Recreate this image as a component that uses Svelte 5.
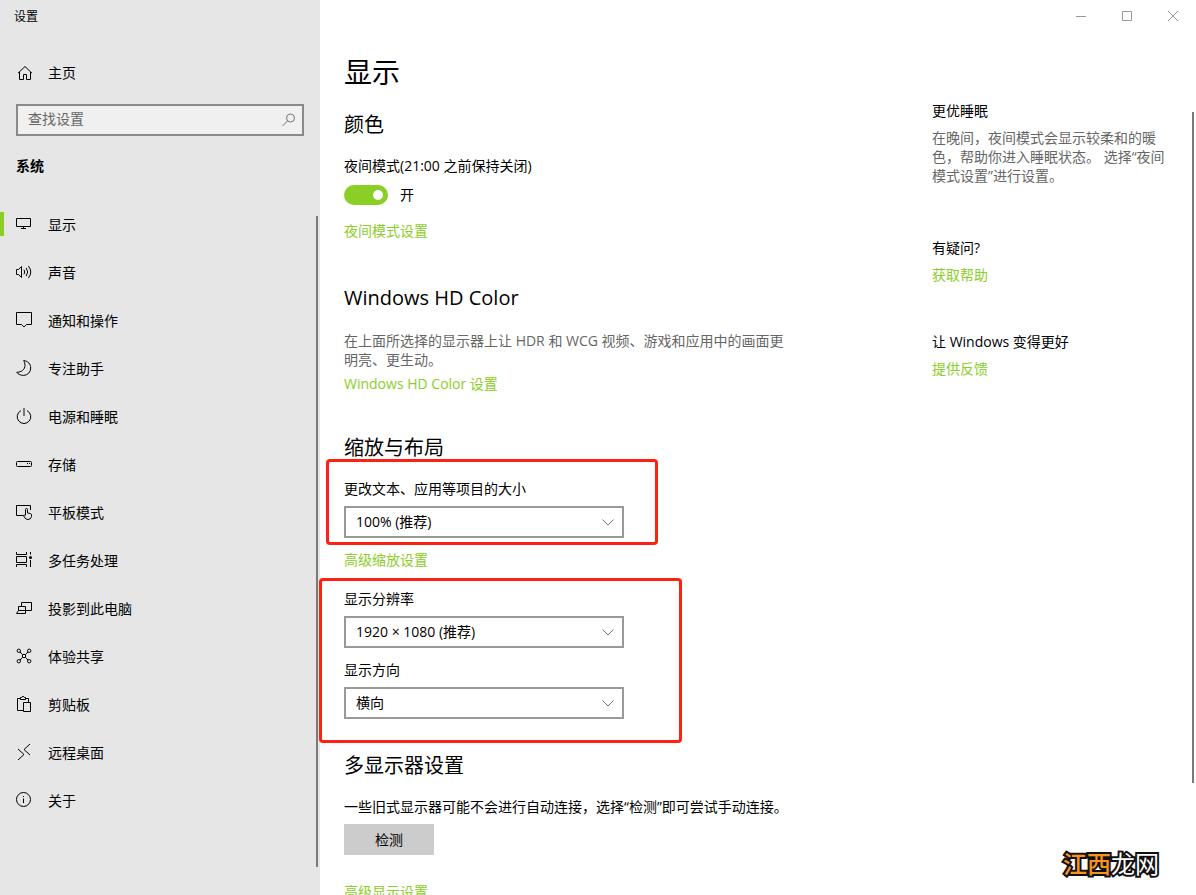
<script>
  const navItems = [
    { id: 'display', label: '显示' },
    { id: 'sound', label: '声音' },
    { id: 'notifications', label: '通知和操作' },
    { id: 'focus', label: '专注助手' },
    { id: 'power', label: '电源和睡眠' },
    { id: 'storage', label: '存储' },
    { id: 'tablet', label: '平板模式' },
    { id: 'multitask', label: '多任务处理' },
    { id: 'project', label: '投影到此电脑' },
    { id: 'shared', label: '体验共享' },
    { id: 'clipboard', label: '剪贴板' },
    { id: 'remote', label: '远程桌面' },
    { id: 'about', label: '关于' }
  ];

  let current = $state('display');
  let nightMode = $state(true);
  let query = $state('');
  let scale = $state('100% (推荐)');
  let resolution = $state('1920 × 1080 (推荐)');
  let orientation = $state('横向');

  const scales = ['100% (推荐)', '125%', '150%', '175%'];
  const resolutions = ['1920 × 1080 (推荐)', '1680 × 1050', '1600 × 900', '1280 × 720'];
  const orientations = ['横向', '纵向', '横向(翻转)', '纵向(翻转)'];

  function select(e, id) {
    e.preventDefault();
    current = id;
  }
</script>

{#snippet icon(id)}
  <svg class="icon" width="16" height="16" viewBox="0 0 16 16" aria-hidden="true">
    {#if id === 'home'}
      <path d="M2 9.200 9 2.500l7 6.700M3.500 8v7.500h4v-5h3v5h4V8" />
    {:else if id === 'display'}
      <path d="M.5 2.500h14v8H.5zM7.500 10.500v2M5 12.500h5" />
    {:else if id === 'sound'}
      <path d="M.5 5.500h2l3-3v11l-3-3h-2zM8 5.700q1.600 2.300 0 4.600M10.200 3.900q3 4.100 0 8.200M12.400 2q4.800 6 0 12" />
    {:else if id === 'notifications'}
      <path d="M.5.500h15v12h-5L8 15l-2.500-2.500H.5z" />
    {:else if id === 'focus'}
      <path d="M7.700.6C12 1 14.700 4 14.700 8a7.200 7.200 0 0 1-7.200 7.400C4.500 15.400 2 14.200.7 12.300 5.500 12.300 9 9.500 9 5.200 9 3.200 8.500 1.700 7.700.6z" />
    {:else if id === 'power'}
      <path d="M5 2.600a6.800 6.800 0 1 0 6 0" />
      <path class="soft" d="M8 0v8" />
    {:else if id === 'storage'}
      <rect x=".5" y="5.500" width="15" height="5" rx="1" />
      <path d="M11 7.500h1M13 7.500h1" />
    {:else if id === 'tablet'}
      <path d="M7 11.500H.5v-10h14V6" />
      <path d="M9.500 11V5.500q0-1 1-1t1 1V9l3 .6q1 .4 1 1.400v1.500q-.5 3-3.500 3-2 0-3-1.500L7.300 11.500q.5-1.300 2.200.3" />
    {:else if id === 'multitask'}
      <path d="M.5 0v2.500h10V0M.5 4.500h10v6H.5zM.5 15v-2.500h10V15M14.500 0v2.500M14.500 8v7" />
      <circle class="fill" cx="14.500" cy="5.500" r="1.500" />
    {:else if id === 'project'}
      <path d="M5.500 6V2.500h10v8H10M2.500 10.500v-4h7v4M.5 13.500h9M.5 13.500l2-3h7v3" />
    {:else if id === 'shared'}
      <circle cx="2.800" cy="2.800" r="1.700" />
      <circle cx="13.200" cy="2.800" r="1.700" />
      <circle cx="2.800" cy="13.200" r="1.700" />
      <circle cx="13.200" cy="13.200" r="1.700" />
      <circle cx="8" cy="8" r="1.700" />
      <path d="m4 4 2.800 2.800M12 4 9.200 6.800M4 12l2.800-2.800M12 12 9.200 9.200" />
    {:else if id === 'clipboard'}
      <path d="M7 14.500H1.500v-12h3M9.500 2.500h3V6M4.500 1.500v2h5v-2h-1Q8.300.5 7 .5t-1.500 1zM7.500 6.500h7v9h-7z" />
    {:else if id === 'remote'}
      <path d="m2 5 6 5.500L2 16M14 0 8 5.500 14 11" />
    {:else if id === 'about'}
      <circle cx="7.500" cy="7.500" r="7" />
      <path d="M7.500 6.500V11M7.500 4v1" />
    {/if}
  </svg>
{/snippet}

{#snippet dropdown(id, label, value, options, onchange)}
  <div class="field">
    <label for={id}>{label}</label>
    <div class="select-box">
      <select {id} {value} onchange={(e) => onchange(e.target.value)}>
        {#each options as option}
          <option value={option}>{option}</option>
        {/each}
      </select>
      <svg class="chevron" width="12" height="7" viewBox="0 0 12 7" aria-hidden="true">
        <path d="m.5.500 5.500 5.500L11.500.5" />
      </svg>
    </div>
  </div>
{/snippet}

<div class="window">
  <aside class="sidebar">
    <div class="app-title">设置</div>
    <a class="nav-item home" href="#home">{@render icon('home')}<span>主页</span></a>

    <div class="search">
      <input type="text" placeholder="查找设置" aria-label="查找设置" bind:value={query} />
      <svg width="14" height="14" viewBox="0 0 14 14" aria-hidden="true">
        <circle cx="8.500" cy="5" r="4" />
        <path d="M5.700 7.800.5 13" />
      </svg>
    </div>

    <div class="group-title">系统</div>

    <div class="nav-area">
      <nav>
        {#each navItems as item (item.id)}
          <a
            class="nav-item"
            class:active={current === item.id}
            href="#{item.id}"
            onclick={(e) => select(e, item.id)}
          >
            {@render icon(item.id)}<span>{item.label}</span>
          </a>
        {/each}
      </nav>
      <div class="thumb"></div>
    </div>
  </aside>

  <div class="main">
    <div class="titlebar">
      <button aria-label="最小化">
        <svg width="10" height="10" viewBox="0 0 10 10"><path d="M0 5.500h10" /></svg>
      </button>
      <button aria-label="最大化">
        <svg width="10" height="10" viewBox="0 0 10 10"><path d="M.5.500h9v9h-9z" /></svg>
      </button>
      <button aria-label="关闭">
        <svg width="10" height="10" viewBox="0 0 10 10"><path d="m0 0 10 10M10 0 0 10" /></svg>
      </button>
    </div>

    <div class="body">
      <main class="content">
        <h1>显示</h1>

        <section class="color">
          <h2>颜色</h2>
          <label for="night">夜间模式(21:00 之前保持关闭)</label>
          <div class="toggle-row">
            <input id="night" class="toggle" type="checkbox" role="switch" bind:checked={nightMode} />
            <span>{nightMode ? '开' : '关'}</span>
          </div>
          <a class="link" href="#night-settings">夜间模式设置</a>
        </section>

        <section class="hd-color">
          <h2>Windows HD Color</h2>
          <p class="muted">在上面所选择的显示器上让 HDR 和 WCG 视频、游戏和应用中的画面更明亮、更生动。</p>
          <a class="link" href="#hd-color">Windows HD Color 设置</a>
        </section>

        <section class="layout">
          <h2>缩放与布局</h2>
          <div class="marked small">
            {@render dropdown('scale', '更改文本、应用等项目的大小', scale, scales, (v) => (scale = v))}
          </div>
          <a class="link" href="#scaling">高级缩放设置</a>
          <div class="marked large">
            {@render dropdown('resolution', '显示分辨率', resolution, resolutions, (v) => (resolution = v))}
            {@render dropdown('orientation', '显示方向', orientation, orientations, (v) => (orientation = v))}
          </div>
        </section>

        <section class="multi">
          <h2>多显示器设置</h2>
          <p>一些旧式显示器可能不会进行自动连接，选择“检测”即可尝试手动连接。</p>
          <button class="detect">检测</button>
          <a class="link" href="#advanced">高级显示设置</a>
        </section>
      </main>

      <aside class="help">
        <section>
          <h3>更优睡眠</h3>
          <p class="muted">在晚间，夜间模式会显示较柔和的暖色，帮助你进入睡眠状态。 选择“夜间模式设置”进行设置。</p>
        </section>
        <section>
          <h3>有疑问?</h3>
          <a class="link" href="#help">获取帮助</a>
        </section>
        <section>
          <h3>让 Windows 变得更好</h3>
          <a class="link" href="#feedback">提供反馈</a>
        </section>
      </aside>
      <div class="thumb"></div>
    </div>
  </div>

  <div class="watermark"><span>江西</span>龙网</div>
</div>

<style>
  :global(body) {
    margin: 0;
  }

  .window {
    --accent: #8bce26;
    --mark: #ff2014;
    position: relative;
    display: grid;
    grid-template-columns: 320px minmax(0, 1fr);
    height: 100vh;
    overflow: hidden;
    background: #fff;
    color: #000;
    font: 14px/20px 'Open Sans', 'Noto Sans CJK SC', sans-serif;
  }

  h1, h2, h3, p {
    margin: 0;
    font-weight: 400;
  }

  input, select, button {
    box-sizing: border-box;
    margin: 0;
    color: inherit;
    font: inherit;
  }

  svg {
    flex: none;
    fill: none;
    stroke: currentColor;
  }

  /* Sidebar */
  .sidebar {
    display: flex;
    flex-direction: column;
    min-height: 0;
    background: #e6e6e6;
  }

  .app-title {
    padding-left: 14px;
    font-size: 12px;
    line-height: 34px;
  }

  .nav-item {
    position: relative;
    display: flex;
    align-items: center;
    gap: 16px;
    height: 48px;
    padding-left: 16px;
    color: inherit;
    text-decoration: none;
  }

  .nav-item.home {
    height: 40px;
    margin: 19px 0 11px;
  }

  .nav-item.active::before {
    content: '';
    position: absolute;
    left: 0;
    top: 11px;
    width: 4px;
    height: 24px;
    background: var(--accent);
  }

  .icon {
    margin-bottom: 2px;
    overflow: visible;
  }

  .soft {
    stroke: #777;
    stroke-width: 2;
  }

  .fill {
    fill: currentColor;
    stroke: none;
  }

  .search {
    display: flex;
    align-items: center;
    box-sizing: border-box;
    height: 32px;
    margin: 0 16px;
    padding-right: 6px;
    border: 2px solid #8a8a8a;
    background: #f0f0f0;
  }

  .search input {
    flex: 1;
    min-width: 0;
    height: 28px;
    padding: 0 10px 3px;
    border: 0;
    outline: 0;
    background: none;
  }

  .search input::placeholder {
    color: #666;
    opacity: 1;
  }

  .search svg {
    color: #777;
  }

  .group-title {
    margin: 20px 16px 25px;
    font-weight: 700;
  }

  .nav-area {
    display: flex;
    flex: 1;
    min-height: 0;
  }

  nav {
    flex: 1;
  }

  .thumb {
    flex: none;
    width: 2px;
    background: #7a7a7a;
  }

  .nav-area .thumb {
    margin: 15px 2px 28px 0;
  }

  /* Main pane */
  .main {
    display: flex;
    flex-direction: column;
    min-height: 0;
  }

  .titlebar {
    display: flex;
    flex: none;
    justify-content: flex-end;
    height: 32px;
  }

  .titlebar button {
    display: flex;
    align-items: center;
    justify-content: center;
    width: 46px;
    padding: 0;
    border: 0;
    background: none;
    color: #999;
  }

  .body {
    display: flex;
    flex: 1;
    min-height: 0;
    padding-left: 24px;
  }

  .content {
    flex: 1;
    min-width: 0;
    padding-top: 22px;
  }

  h1 {
    font-size: 28px;
    line-height: 36px;
  }

  h2 {
    margin-bottom: 17px;
    font-size: 20px;
    line-height: 28px;
  }

  label, .link {
    display: block;
    width: fit-content;
  }

  .link {
    color: var(--accent);
    text-decoration: none;
  }

  .muted {
    max-width: 444px;
    color: #666;
    line-height: 19px;
  }

  .color {
    margin-top: 21px;
  }

  .toggle-row {
    display: flex;
    align-items: center;
    gap: 12px;
    margin: 9px 0 16px;
  }

  .toggle {
    display: flex;
    align-items: center;
    justify-content: flex-start;
    appearance: none;
    width: 44px;
    height: 20px;
    padding: 0 5px;
    border-radius: 10px;
    background: #999;
  }

  .toggle:checked {
    justify-content: flex-end;
    background: var(--accent);
  }

  .toggle::before {
    content: '';
    width: 10px;
    height: 10px;
    border-radius: 50%;
    background: #fff;
  }

  .hd-color {
    margin-top: 43px;
  }

  .hd-color h2 {
    margin-bottom: 19px;
  }

  .hd-color .link {
    margin-top: 5px;
  }

  .layout {
    margin-top: 40px;
  }

  .marked {
    position: relative;
    display: grid;
    gap: 12px;
    width: 280px;
  }

  .marked::after {
    content: '';
    position: absolute;
    border: 3px solid var(--mark);
    border-radius: 4px;
    pointer-events: none;
  }

  .marked.small::after {
    inset: -20px -34px -7px -18px;
  }

  .marked.large::after {
    inset: -11px -58px -24px -25px;
  }

  .layout .link {
    margin: 12px 0 19px;
  }

  .field label {
    margin-bottom: 7px;
  }

  .select-box {
    display: grid;
    align-items: center;
  }

  .select-box > * {
    grid-area: 1 / 1;
  }

  select {
    appearance: none;
    width: 100%;
    height: 32px;
    padding: 0 32px 0 10px;
    border: 2px solid #999;
    border-radius: 0;
    background: #fff;
  }

  .chevron {
    justify-self: end;
    margin-right: 10px;
    color: #777;
    pointer-events: none;
  }

  .multi {
    margin-top: 33px;
  }

  .detect {
    width: 90px;
    height: 31px;
    margin: 7px 0 27px;
    padding: 0;
    border: 0;
    background: #ccc;
  }

  .help {
    display: grid;
    flex: none;
    align-content: start;
    gap: 47px;
    width: 240px;
    padding: 69px 20px 0 0;
  }

  .help h3 {
    margin-bottom: 7px;
    font-size: 14px;
  }

  .help .muted {
    padding-bottom: 6px;
  }

  .body > .thumb {
    margin: 80px 2px 112px 0;
  }

  .watermark {
    position: absolute;
    right: 37px;
    bottom: 15px;
    color: #fff;
    font-size: 24px;
    line-height: 32px;
    -webkit-text-stroke: 4px #111;
    paint-order: stroke fill;
  }

  .watermark span {
    color: #f7941d;
    font-weight: 500;
  }
</style>
